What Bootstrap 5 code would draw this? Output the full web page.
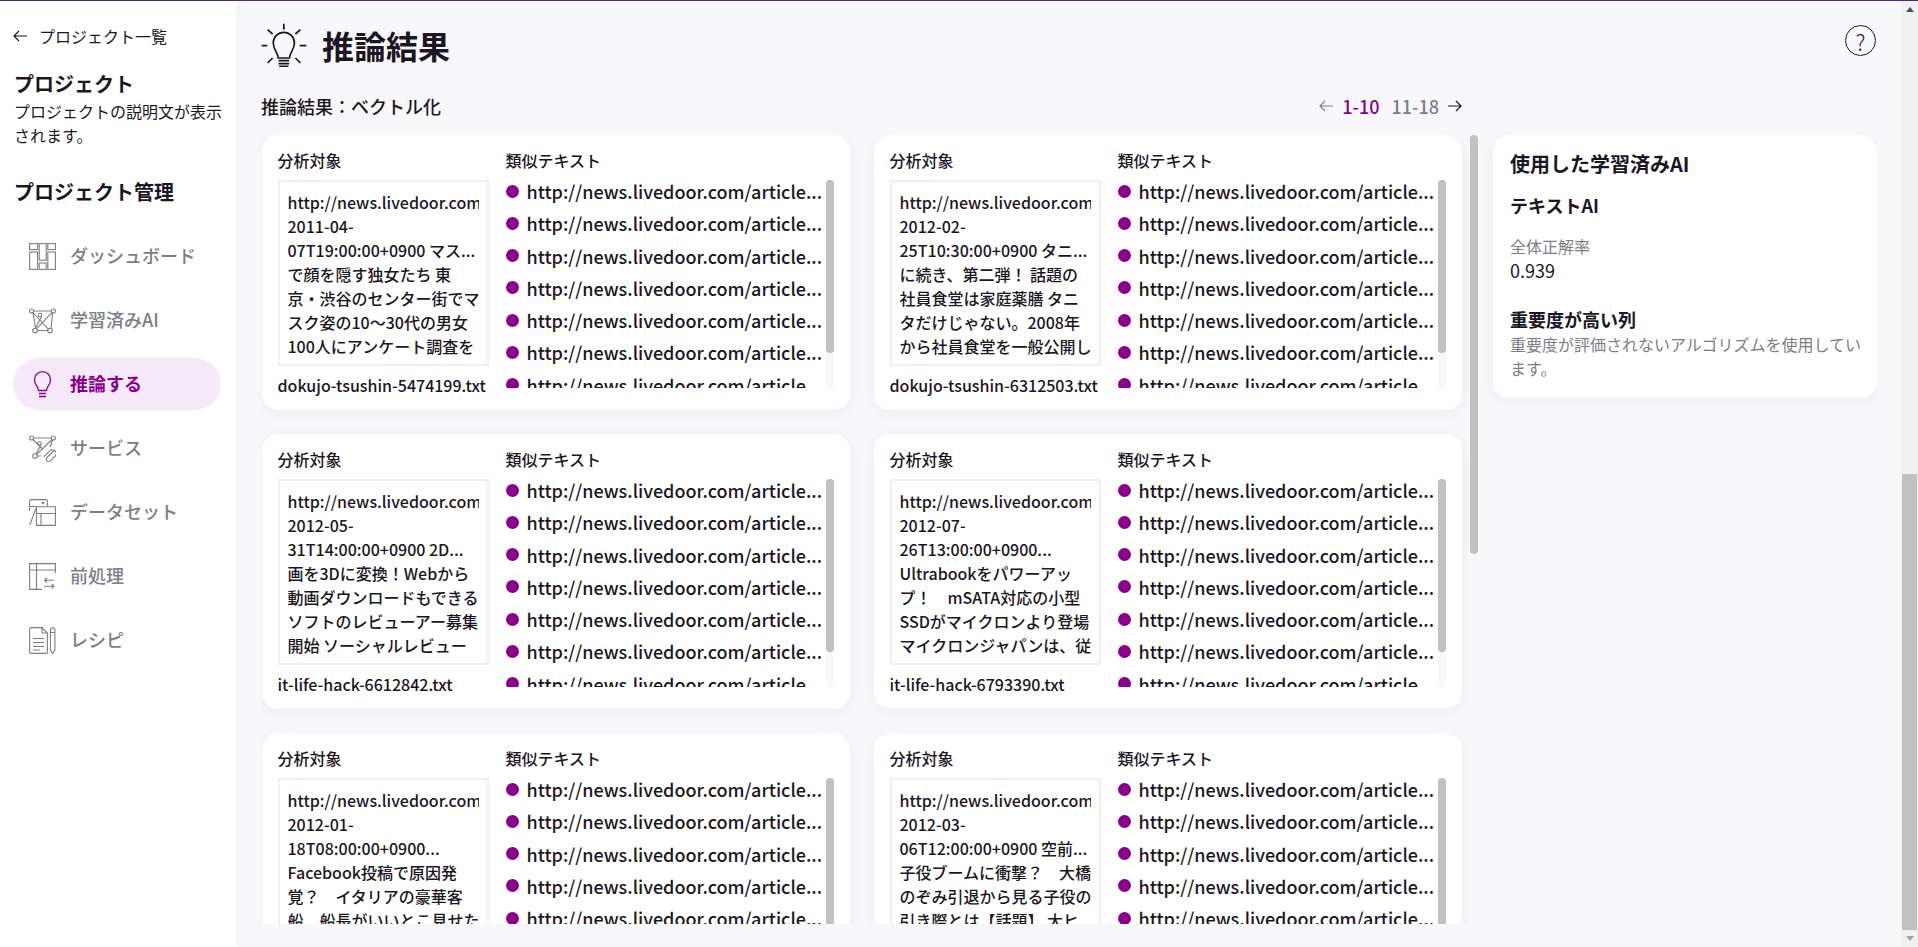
<!DOCTYPE html>
<html lang="ja">
<head>
<meta charset="utf-8">
<title>推論結果</title>
<link href="https://cdn.jsdelivr.net/npm/bootstrap@5.3.0/dist/css/bootstrap.min.css" rel="stylesheet">
<style>
html,body{height:100%;overflow:hidden}
body{font-family:"Noto Sans CJK JP","Noto Sans",sans-serif;color:#1c1524;background:#f8f8fb;font-size:16px}
.topline{height:1px;background:#4f2a80}
.shell{height:946px}
.sidebar{width:237px;background:#fff;padding:23px 14px 0 13px;box-shadow:1px 0 6px rgba(0,0,0,.03);z-index:2}
.backlink{color:#1c1524;line-height:24px;gap:12px;text-decoration:none}
.projname{font-size:20px;font-weight:700;line-height:30px;margin:21px 0 0 1px}
.projdesc{line-height:24px;margin:0 0 0 1px}
.mgmt{font-size:20px;font-weight:700;line-height:30px;margin:30px 0 23px 1px}
.menuitem{height:52px;width:208px;border-radius:26px;padding-left:16px;gap:14px;font-size:18px;font-weight:500;color:#7d7d87;text-decoration:none;margin-bottom:12px}
.menuitem span{padding-bottom:2px}
.menuitem svg{width:27px;height:27px;fill:none;stroke:#7d7d87;stroke-width:1.1}
.menuitem.on{background:#f5e9fa;color:#8b008b;font-weight:700}
.menuitem.on svg{stroke:#8b008b;stroke-width:1.3}
.mainpane{padding:0 24px 23px;min-width:0}
.headbar{height:89px}
.headleft{margin-top:-2px}
.titlebulb{width:46px;height:44px;fill:none;stroke:#1c1524;stroke-width:5}
.pagetitle{font-size:32px;font-weight:700;margin:0 0 0 15px;line-height:44px}
.helpbtn{width:31px;height:31px;border:1.5px solid #1c1524;font-size:22px;font-weight:300;line-height:1;margin:-10px 1px 0 0;border-radius:50%}
.subrow{height:32px;margin:0 415px 13px 0;font-size:18px}
.pager{gap:9px}
.pager svg{width:14px;height:12px;fill:none;stroke-width:1.2}
.pager .cur{color:#8b008b;font-weight:500}
.pager .oth{color:#7d7d87;font-weight:500;margin-left:3px}
.cardarea{overflow:hidden;margin-left:-12px;padding:0 8.5px 0 12.5px;min-width:0}
.vtrack{width:8px;flex:none}
.vthumb{height:419px;background:#c1c1c1;border-radius:4px}
.resultcard{height:275px;background:#fff;border-radius:16px;padding:15px 16px 16px;box-shadow:0 3px 14px rgba(30,20,60,.05)}
.collabel{line-height:20px;margin-bottom:10px;font-weight:500}
.leftcol{width:211px;flex:none;margin-right:17px}
.rightcol{min-width:0;flex:1}
.sourcebox{height:186px;border:2px solid #f0f0f2;padding:8px;line-height:24px;font-weight:500}
.sourcetext{height:168px;white-space:nowrap;overflow:hidden}
.filename{line-height:24px;margin-top:7px;white-space:nowrap;font-weight:500}
.simwrap{height:208px}
.simlist{list-style:none;margin:0;padding:0;overflow:hidden;min-width:0}
.simlist li{height:22px;line-height:22px;margin-bottom:10.3px;font-size:18px;white-space:nowrap;gap:8px;font-weight:500}
.simlist li::before{content:"";width:13px;height:13px;border-radius:50%;background:#8b008b;flex:none}
.listtrack{width:8px;flex:none;background:#f8f8f8;border-radius:4px}
.listthumb{height:173px;background:#c1c1c1;border-radius:4px}
.infocard{width:384px;flex:none;align-self:flex-start;height:263px;margin-left:15px;background:#fff;border-radius:16px;padding:15px 12px 16px 17px;box-shadow:0 3px 14px rgba(30,20,60,.05)}
.infotitle{font-size:20px;font-weight:700;line-height:28px;margin:0 0 14px}
.infosub{font-size:18px;font-weight:700;line-height:26px;margin:0 0 16px}
.mutedgray{color:#7d7d87}
.metricval{font-size:18px;line-height:24px;margin-bottom:24px}
.fakebar{width:17px;background:#f1f1f1;flex:none;z-index:3}
.fakethumb{height:456px;width:15px;margin:auto auto 0;background:#c1c1c1}
.arrowslot{height:17px}
.tri-up{width:0;height:0;border:4px solid transparent;border-top:0;border-bottom:5px solid #505050}
.tri-down{width:0;height:0;border:4px solid transparent;border-bottom:0;border-top:5px solid #a3a3a3}
</style>
</head>
<body>
<div class="topline"></div>
<div class="shell d-flex">
  <aside class="sidebar flex-shrink-0">
    <a href="#" class="backlink d-flex align-items-center">
      <svg width="14" height="12" viewBox="0 0 14 12" fill="none" stroke="#1c1524" stroke-width="1.2"><path d="M14 6H1M6 1 1 6l5 5"/></svg>
      <span>プロジェクト一覧</span>
    </a>
    <div class="projname">プロジェクト</div>
    <p class="projdesc">プロジェクトの説明文が表示されます。</p>
    <div class="mgmt">プロジェクト管理</div>
    <nav class="d-flex flex-column">
      <a href="#" class="menuitem d-flex align-items-center">
        <svg viewBox="0 0 27 27"><rect x=".6" y=".6" width="8" height="6"/><rect x=".6" y="9" width="8" height="17.4"/><rect x="10.2" y=".6" width="7" height="16.6"/><rect x="10.2" y="20" width="7" height="6.4"/><rect x="18.8" y=".6" width="7.6" height="6"/><rect x="18.8" y="9" width="7.6" height="17.4"/></svg>
        <span>ダッシュボード</span>
      </a>
      <a href="#" class="menuitem d-flex align-items-center">
        <svg viewBox="0 0 27 27"><circle cx="2.6" cy="4" r="2"/><circle cx="24.4" cy="4" r="2"/><circle cx="6" cy="23.5" r="2.3"/><circle cx="21" cy="23.5" r="2.3"/><circle cx="11" cy="8" r="1.8"/><path d="M4.6 4h17.8M6.5 21.2 12.5 9.5M4 5.500 19.500 22.400M23.500 6 22 21.200M8.300 23.500h10.400M23 5.400 7.600 21.800M6.500 21 4 6"/></svg>
        <span>学習済みAI</span>
      </a>
      <a href="#" class="menuitem on d-flex align-items-center">
        <svg viewBox="0 0 27 27"><path d="M9.500 19.500c0-4-4-5.500-4-10.800a8 8 0 0 1 16 0c0 5.300-4 6.800-4 10.800zM10 22.500h7M10 25.500h7"/></svg>
        <span>推論する</span>
      </a>
      <a href="#" class="menuitem d-flex align-items-center">
        <svg viewBox="0 0 27 27"><circle cx="2.6" cy="3" r="2"/><circle cx="24.4" cy="3" r="2"/><circle cx="6" cy="21" r="2.3"/><circle cx="10.5" cy="8.5" r="1.8"/><path d="M4.600 3h17.800M7 19 12 10M4 4.500 14 14.500M23.500 5 21 12M8.300 21H12M23 4.500 7.600 19.400"/><path d="m25.500 15-7.500 7.500a2.400 2.400 0 0 0 3.400 3.400L26 21.300a3.800 3.800 0 0 0-5.400-5.400l-6 6"/></svg>
        <span>サービス</span>
      </a>
      <a href="#" class="menuitem d-flex align-items-center">
        <svg viewBox="0 0 27 27"><path d="M7 7.500H.6V2a1.400 1.400 0 0 1 1.400-1.400h15a1.400 1.400 0 0 1 1.400 1.400v5.500M.6 7.500V12M.6 26.400 7 9.500"/><circle cx="14" cy="4" r=".8"/><path d="M7.500 7.700h18.900v18.700H7.500zM7.500 14.500h18.900M12 14.500v11.900"/></svg>
        <span>データセット</span>
      </a>
      <a href="#" class="menuitem d-flex align-items-center">
        <svg viewBox="0 0 27 27"><path d="M26.400 10V.6H.6v25.800H13M.6 7h25.800M7.500.6v25.800"/><path d="M25 17.300H15.500M18 15l-2.500 2.300 2.500 2.300M15 23.300h10M22.500 21l2.500 2.300-2.500 2.300"/></svg>
        <span>前処理</span>
      </a>
      <a href="#" class="menuitem d-flex align-items-center">
        <svg viewBox="0 0 27 27"><path d="M13 .6H2a1.400 1.400 0 0 0-1.400 1.400v23a1.400 1.400 0 0 0 1.400 1.400h15a1.400 1.400 0 0 0 1.400-1.400V6zM13 .6V6h5.400M4 11.500h11M4 15.500h11M4 19.500h11M4 23h7"/><path d="M21.500 3a2.200 2.200 0 0 1 4.400 0v20l-2.200 3.500-2.200-3.500zM21.500 5.500h4.400"/></svg>
        <span>レシピ</span>
      </a>
    </nav>
  </aside>

  <main class="mainpane flex-fill d-flex flex-column">
    <header class="headbar d-flex align-items-center justify-content-between flex-shrink-0">
      <div class="headleft d-flex align-items-center">
        <svg class="titlebulb" viewBox="33 35 139 132" preserveAspectRatio="none"><path d="M85 140c0-15-15-25-15-45a32 32 0 0 1 64 0c0 20-15 30-15 45zM86 148h32M86 157h32M88 165h28M102 37v18M53 55l15 13M152 55l-15 13M35 103h17M150 103h20M53 155l15-15M152 155l-15-15"/></svg>
        <h1 class="pagetitle">推論結果</h1>
      </div>
      <div class="helpbtn d-flex align-items-center justify-content-center">?</div>
    </header>
    <div class="subrow d-flex align-items-center justify-content-between flex-shrink-0">
      <div class="fw-medium">推論結果：ベクトル化</div>
      <div class="pager d-flex align-items-center">
        <svg viewBox="0 0 14 12" stroke="#7d7d87"><path d="M14 6H1M6 1 1 6l5 5"/></svg>
        <span class="cur">1-10</span>
        <span class="oth">11-18</span>
        <svg viewBox="0 0 14 12" stroke="#1c1524"><path d="M0 6h13M8 1l5 5-5 5"/></svg>
      </div>
    </div>
    <div class="d-flex flex-fill overflow-hidden">
      <div class="cardarea flex-fill">
        <div class="row g-4">
          <div class="col-6"><div class="resultcard d-flex">
            <div class="leftcol">
              <div class="collabel">分析対象</div>
              <div class="sourcebox"><div class="sourcetext">http://news.livedoor.com<br>2011-04-<br>07T19:00:00+0900 マス...<br>で顔を隠す独女たち 東<br>京・渋谷のセンター街でマ<br>スク姿の10〜30代の男女<br>100人にアンケート調査を</div></div>
              <div class="filename">dokujo-tsushin-5474199.txt</div>
            </div>
            <div class="rightcol">
              <div class="collabel">類似テキスト</div>
              <div class="simwrap d-flex">
                <ul class="simlist flex-fill">
                  <li class="d-flex align-items-center">http://news.livedoor.com/article...</li>
                  <li class="d-flex align-items-center">http://news.livedoor.com/article...</li>
                  <li class="d-flex align-items-center">http://news.livedoor.com/article...</li>
                  <li class="d-flex align-items-center">http://news.livedoor.com/article...</li>
                  <li class="d-flex align-items-center">http://news.livedoor.com/article...</li>
                  <li class="d-flex align-items-center">http://news.livedoor.com/article...</li>
                  <li class="d-flex align-items-center">http://news.livedoor.com/article...</li>
                </ul>
                <div class="listtrack"><div class="listthumb"></div></div>
              </div>
            </div>
          </div></div>
          <div class="col-6"><div class="resultcard d-flex">
            <div class="leftcol">
              <div class="collabel">分析対象</div>
              <div class="sourcebox"><div class="sourcetext">http://news.livedoor.com<br>2012-02-<br>25T10:30:00+0900 タニ...<br>に続き、第二弾！ 話題の<br>社員食堂は家庭薬膳 タニ<br>タだけじゃない。2008年<br>から社員食堂を一般公開し</div></div>
              <div class="filename">dokujo-tsushin-6312503.txt</div>
            </div>
            <div class="rightcol">
              <div class="collabel">類似テキスト</div>
              <div class="simwrap d-flex">
                <ul class="simlist flex-fill">
                  <li class="d-flex align-items-center">http://news.livedoor.com/article...</li>
                  <li class="d-flex align-items-center">http://news.livedoor.com/article...</li>
                  <li class="d-flex align-items-center">http://news.livedoor.com/article...</li>
                  <li class="d-flex align-items-center">http://news.livedoor.com/article...</li>
                  <li class="d-flex align-items-center">http://news.livedoor.com/article...</li>
                  <li class="d-flex align-items-center">http://news.livedoor.com/article...</li>
                  <li class="d-flex align-items-center">http://news.livedoor.com/article...</li>
                </ul>
                <div class="listtrack"><div class="listthumb"></div></div>
              </div>
            </div>
          </div></div>
          <div class="col-6"><div class="resultcard d-flex">
            <div class="leftcol">
              <div class="collabel">分析対象</div>
              <div class="sourcebox"><div class="sourcetext">http://news.livedoor.com<br>2012-05-<br>31T14:00:00+0900 2D...<br>画を3Dに変換！Webから<br>動画ダウンロードもできる<br>ソフトのレビューアー募集<br>開始 ソーシャルレビュー</div></div>
              <div class="filename">it-life-hack-6612842.txt</div>
            </div>
            <div class="rightcol">
              <div class="collabel">類似テキスト</div>
              <div class="simwrap d-flex">
                <ul class="simlist flex-fill">
                  <li class="d-flex align-items-center">http://news.livedoor.com/article...</li>
                  <li class="d-flex align-items-center">http://news.livedoor.com/article...</li>
                  <li class="d-flex align-items-center">http://news.livedoor.com/article...</li>
                  <li class="d-flex align-items-center">http://news.livedoor.com/article...</li>
                  <li class="d-flex align-items-center">http://news.livedoor.com/article...</li>
                  <li class="d-flex align-items-center">http://news.livedoor.com/article...</li>
                  <li class="d-flex align-items-center">http://news.livedoor.com/article...</li>
                </ul>
                <div class="listtrack"><div class="listthumb"></div></div>
              </div>
            </div>
          </div></div>
          <div class="col-6"><div class="resultcard d-flex">
            <div class="leftcol">
              <div class="collabel">分析対象</div>
              <div class="sourcebox"><div class="sourcetext">http://news.livedoor.com<br>2012-07-<br>26T13:00:00+0900...<br>Ultrabookをパワーアッ<br>プ！　mSATA対応の小型<br>SSDがマイクロンより登場<br>マイクロンジャパンは、従</div></div>
              <div class="filename">it-life-hack-6793390.txt</div>
            </div>
            <div class="rightcol">
              <div class="collabel">類似テキスト</div>
              <div class="simwrap d-flex">
                <ul class="simlist flex-fill">
                  <li class="d-flex align-items-center">http://news.livedoor.com/article...</li>
                  <li class="d-flex align-items-center">http://news.livedoor.com/article...</li>
                  <li class="d-flex align-items-center">http://news.livedoor.com/article...</li>
                  <li class="d-flex align-items-center">http://news.livedoor.com/article...</li>
                  <li class="d-flex align-items-center">http://news.livedoor.com/article...</li>
                  <li class="d-flex align-items-center">http://news.livedoor.com/article...</li>
                  <li class="d-flex align-items-center">http://news.livedoor.com/article...</li>
                </ul>
                <div class="listtrack"><div class="listthumb"></div></div>
              </div>
            </div>
          </div></div>
          <div class="col-6"><div class="resultcard d-flex">
            <div class="leftcol">
              <div class="collabel">分析対象</div>
              <div class="sourcebox"><div class="sourcetext">http://news.livedoor.com<br>2012-01-<br>18T08:00:00+0900...<br>Facebook投稿で原因発<br>覚？　イタリアの豪華客<br>船　船長がいいとこ見せた</div></div>
            </div>
            <div class="rightcol">
              <div class="collabel">類似テキスト</div>
              <div class="simwrap d-flex">
                <ul class="simlist flex-fill">
                  <li class="d-flex align-items-center">http://news.livedoor.com/article...</li>
                  <li class="d-flex align-items-center">http://news.livedoor.com/article...</li>
                  <li class="d-flex align-items-center">http://news.livedoor.com/article...</li>
                  <li class="d-flex align-items-center">http://news.livedoor.com/article...</li>
                  <li class="d-flex align-items-center">http://news.livedoor.com/article...</li>
                  <li class="d-flex align-items-center">http://news.livedoor.com/article...</li>
                  <li class="d-flex align-items-center">http://news.livedoor.com/article...</li>
                </ul>
                <div class="listtrack"><div class="listthumb"></div></div>
              </div>
            </div>
          </div></div>
          <div class="col-6"><div class="resultcard d-flex">
            <div class="leftcol">
              <div class="collabel">分析対象</div>
              <div class="sourcebox"><div class="sourcetext">http://news.livedoor.com<br>2012-03-<br>06T12:00:00+0900 空前...<br>子役ブームに衝撃？　大橋<br>のぞみ引退から見る子役の<br>引き際とは【話題】 大ヒ</div></div>
            </div>
            <div class="rightcol">
              <div class="collabel">類似テキスト</div>
              <div class="simwrap d-flex">
                <ul class="simlist flex-fill">
                  <li class="d-flex align-items-center">http://news.livedoor.com/article...</li>
                  <li class="d-flex align-items-center">http://news.livedoor.com/article...</li>
                  <li class="d-flex align-items-center">http://news.livedoor.com/article...</li>
                  <li class="d-flex align-items-center">http://news.livedoor.com/article...</li>
                  <li class="d-flex align-items-center">http://news.livedoor.com/article...</li>
                  <li class="d-flex align-items-center">http://news.livedoor.com/article...</li>
                  <li class="d-flex align-items-center">http://news.livedoor.com/article...</li>
                </ul>
                <div class="listtrack"><div class="listthumb"></div></div>
              </div>
            </div>
          </div></div>
        </div>
      </div>
      <div class="vtrack"><div class="vthumb"></div></div>
      <section class="infocard">
        <h2 class="infotitle">使用した学習済みAI</h2>
        <h3 class="infosub">テキストAI</h3>
        <div class="mutedgray lh-base">全体正解率</div>
        <div class="metricval">0.939</div>
        <h3 class="infosub mb-0">重要度が高い列</h3>
        <p class="mutedgray mb-0 lh-base">重要度が評価されないアルゴリズムを使用しています。</p>
      </section>
    </div>
  </main>

  <div class="fakebar d-flex flex-column">
    <div class="arrowslot d-flex align-items-center justify-content-center"><div class="tri-up"></div></div>
    <div class="fakethumb"></div>
    <div class="arrowslot d-flex align-items-center justify-content-center"><div class="tri-down"></div></div>
  </div>
</div>
<script src="https://cdn.jsdelivr.net/npm/bootstrap@5.3.0/dist/js/bootstrap.bundle.min.js"></script>
</body>
</html>
